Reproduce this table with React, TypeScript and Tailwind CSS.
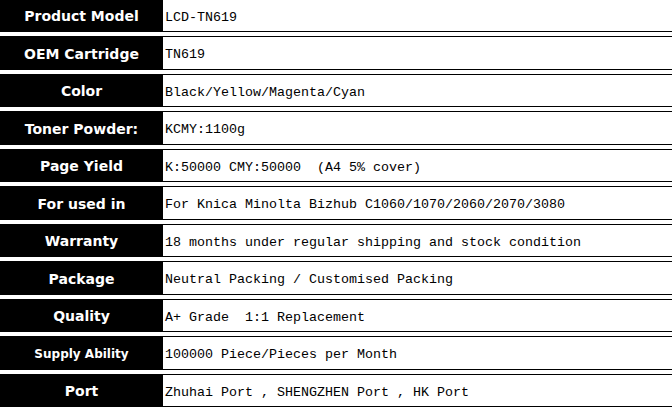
import React from "react";

const rows: { label: string; value: string; small?: boolean }[] = [
  { label: "Product Model", value: "LCD-TN619" },
  { label: "OEM Cartridge", value: "TN619" },
  { label: "Color", value: "Black/Yellow/Magenta/Cyan" },
  { label: "Toner Powder:", value: "KCMY:1100g" },
  { label: "Page Yield", value: "K:50000 CMY:50000  (A4 5% cover)" },
  { label: "For used in", value: "For Knica Minolta Bizhub C1060/1070/2060/2070/3080" },
  { label: "Warranty", value: "18 months under regular shipping and stock condition" },
  { label: "Package", value: "Neutral Packing / Customised Packing" },
  { label: "Quality", value: "A+ Grade  1:1 Replacement" },
  { label: "Supply Ability", value: "100000 Piece/Pieces per Month", small: true },
  { label: "Port", value: "Zhuhai Port , SHENGZHEN Port , HK Port" },
];

export default function App() {
  return (
    <div className="w-[672px] h-[408px] overflow-hidden bg-white">
      <div className="flex flex-col gap-[4px] -mt-[1.5px]">
        {rows.map((r) => (
          <div key={r.label} className="flex h-[33.5px]">
            <div
              className={`w-[163px] shrink-0 bg-black text-white font-bold flex items-center justify-center pt-[3px] ${
                r.small ? "text-[12px]" : "text-[14px]"
              }`}
              style={{ fontFamily: '"DejaVu Sans", Verdana, sans-serif' }}
            >
              {r.label}
            </div>
            <div
              className="flex-1 border-y border-black flex items-center pl-[2px] pt-[5px] text-black text-[13.33px] whitespace-pre"
              style={{ fontFamily: '"Liberation Mono", "Courier New", monospace' }}
            >
              {r.value}
            </div>
          </div>
        ))}
      </div>
    </div>
  );
}
